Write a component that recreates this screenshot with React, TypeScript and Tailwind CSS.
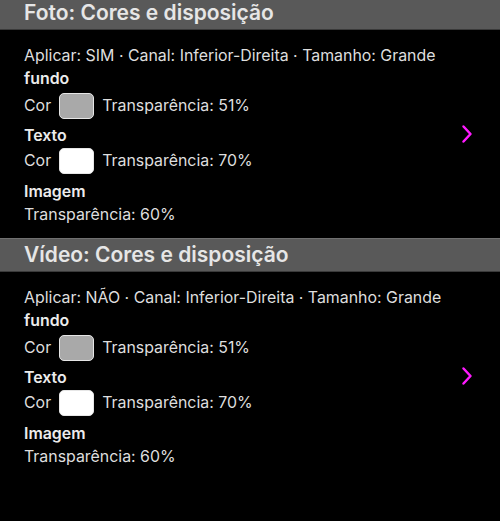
import React from "react";

function Chevron() {
  return (
    <svg width="14" height="20" viewBox="0 0 14 20" className="absolute right-[26px] top-1/2 -translate-y-1/2" fill="none">
      <polyline points="3.5,2.5 10.5,10 3.5,17.5" stroke="#ff1aff" strokeWidth="2.5" strokeLinecap="round" strokeLinejoin="round" />
    </svg>
  );
}

function Swatch({ color }: { color: string }) {
  return <div className={`w-[35px] h-[26px] rounded-[5px] border-[1.5px] border-[#e6e6e6] ${color}`} />;
}

function Section({ title, apply, first }: { title: string; apply: string; first?: boolean }) {
  return (
    <div>
      <div className={`h-[34px] bg-[#595959] border-t border-t-[#707070] border-b border-b-[#3a3a3a] flex items-center px-6 text-[21px] font-semibold text-[#e6e6e6] ${first ? "-mt-[4px]" : ""}`}>
        {title}
      </div>
      <div className="relative h-[208px] px-6 pt-[15px] text-[15.9px] text-[#dedede]">
        <div className="h-[22px] leading-[22px] whitespace-nowrap">
          Aplicar: {apply} · Canal: Inferior-Direita · Tamanho: Grande
        </div>
        <div className="h-[23px] leading-[23px] font-semibold text-[#ececec]">fundo</div>
        <div className="mt-[2px] h-[27px] flex items-center gap-[8px]">
          <span>Cor</span>
          <Swatch color="bg-[#a9a9a9]" />
          <span>Transparência: 51%</span>
        </div>
        <div className="mt-[6px] h-[22px] leading-[22px] font-semibold text-[#ececec]">Texto</div>
        <div className="h-[27px] flex items-center gap-[8px]">
          <span>Cor</span>
          <Swatch color="bg-white" />
          <span>Transparência: 70%</span>
        </div>
        <div className="mt-[7px] h-[22px] leading-[22px] font-semibold text-[#ececec]">Imagem</div>
        <div className="mt-[1px] h-[22px] leading-[22px]">Transparência: 60%</div>
        <Chevron />
      </div>
    </div>
  );
}

export default function App() {
  return (
    <div className="w-[500px] h-[521px] overflow-hidden bg-black" style={{ fontFamily: "Inter, 'Noto Sans', sans-serif" }}>
      <Section title="Foto: Cores e disposição" apply="SIM" first />
      <Section title="Vídeo: Cores e disposição" apply="NÃO" />
    </div>
  );
}
